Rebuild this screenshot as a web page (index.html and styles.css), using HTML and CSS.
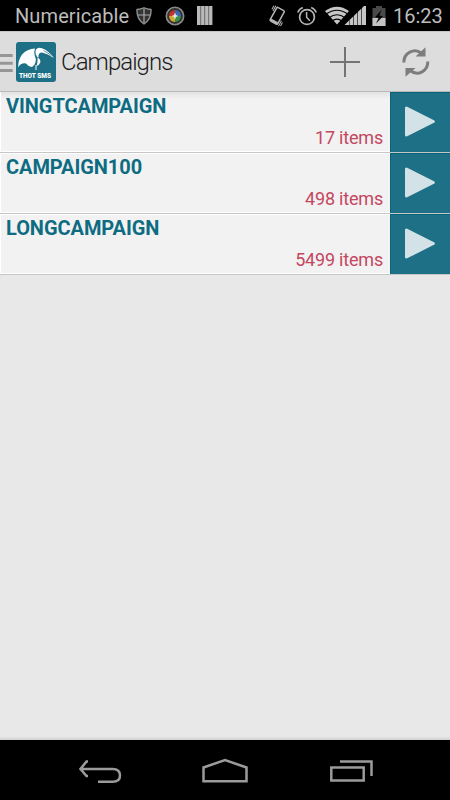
FILE: index.html
```html
<!DOCTYPE html>
<html lang="en">
<head>
  <meta charset="utf-8">
  <title>Campaigns</title>
  <link rel="stylesheet" href="styles.css">
</head>
<body>
<div class="screen">
  <div class="statusbar">
    <span class="carrier">Numericable</span>
    <!-- shield -->
    <svg class="shield" width="16" height="18" viewBox="0 0 16 18">
      <path d="M1 2.5Q5 2 8 .8Q11 2 15 2.5Q15.5 12 8 17Q.5 12 1 2.5Z" fill="#343434" stroke="#8f8f8f" stroke-width="1.4"/>
      <path d="M8 2v14M2 8h12" stroke="#aaa" stroke-width="1.2"/>
    </svg>
    <!-- colour wheel -->
    <svg class="wheel" width="20" height="20" viewBox="0 0 20 20">
      <circle cx="10" cy="10" r="8.7" fill="#343434" stroke="#8b8b8b" stroke-width="1.6"/>
      <path d="M10 10V4A6 6 0 0 0 4 10Z" fill="#c43428"/>
      <path d="M10 10V4A6 6 0 0 1 16 10Z" fill="#3569b5"/>
      <path d="M10 10H4A6 6 0 0 0 10 16Z" fill="#d2a72a"/>
      <path d="M10 10H16A6 6 0 0 1 10 16Z" fill="#349447"/>
      <path d="M10 7.500v5M7.500 10h5" stroke="#e8e8e8" stroke-width="1.600"/>
    </svg>
    <svg class="bars" width="16" height="19" viewBox="0 0 16 19">
      <path d="M0 0h15.400v19H0z" fill="#bababa"/>
      <path d="M3.700 0v19M7.700 0v19M11.700 0v19" stroke="#555" stroke-width=".8"/>
    </svg>
    <span class="spacer"></span>
    <!-- vibrate -->
    <svg class="vibrate" width="18" height="22" viewBox="0 0 18 22">
      <g transform="rotate(29 9 11)" fill="none" stroke="#b5b5b5">
        <rect x="4.800" y="3" width="8.600" height="15.500" rx="1.200" stroke-width="1.500"/>
        <path d="M5 17.200h8" stroke-width="2.400"/>
        <path d="M3 2.500v6M1.300 3.500v4M15.200 13v6M16.900 14v4" stroke-width="1"/>
      </g>
    </svg>
    <!-- alarm -->
    <svg class="alarm" width="20" height="20" viewBox="0 0 20 20" fill="none" stroke="#b5b5b5">
      <circle cx="10" cy="11" r="7.400" stroke-width="1.700"/>
      <path d="M9.600 6v5.200l3.200 3.600" stroke-width="1.500"/>
      <path d="M.8 6.500Q2 3 5.800 1.500M14.200 1.500Q18 3 19.200 6.500" stroke-width="1.600"/>
    </svg>
    <!-- wifi and signal -->
    <svg class="signal" width="42" height="20" viewBox="0 0 42 20">
      <path d="M0 5Q12 -3.500 24 5L12 18.500Z" fill="#c6c6c6"/>
      <path d="M1 8.300Q12 .3 23 8.300M4 11.700Q12 5.700 20 11.700M7 15Q12 11.200 17 15" fill="none" stroke="#000" stroke-width="1.100"/>
      <path d="M19.500 19L24 14.600V19zM24.500 14.100L28.200 10.500V19h-3.700zM28.800 9.900L32.300 6.500V19h-3.500zM32.900 5.900L36.400 2.500V19h-3.500zM37 2L41 -2V19h-4z" fill="#c6c6c6"/>
    </svg>
    <!-- battery -->
    <svg class="battery" width="14" height="20" viewBox="0 0 14 20">
      <path d="M4 0h6v2h3.500v18H.5V2H4z" fill="#494949"/>
      <path d="M.5 12h13v8H.5z" fill="#c3c3c3"/>
      <path d="M9.500 4L3 11.200l3.600.8L4 17.500l7-7.300-3.600-.8z" fill="#050505"/>
    </svg>
    <span class="clock">16:23</span>
  </div>

  <div class="actionbar">
    <svg class="drawer" width="13" height="20" viewBox="0 0 13 20">
      <path d="M0 2.500h12.700M0 10.300h12.700M0 17.500h12.700" stroke="#969696" stroke-width="3"/>
    </svg>
    <div class="logo">
      <svg width="40" height="28" viewBox="0 0 40 28">
        <!-- ibis -->
        <path d="M2.200 25.500Q2 18 6 12.500Q11 7 19 6.500Q17.500 10 18.800 14Q20.500 17 19.600 20Q19 23 16 25Q12 24.500 10 21.500Q5 20.500 2.200 25.500Z" fill="#fff"/>
        <path d="M21.500 15.500Q25 17 24.300 20.500Q23.500 23 20.500 24Q22 19.500 21.500 15.500Z" fill="#fff"/>
        <path d="M20 7.500Q22 4.600 26 6.300Q33 9 37.800 16Q32 11.500 26 10.500Q22 10.500 22.500 15.500L21.200 15Q18.500 11 20 7.500Z" fill="#fff"/>
        <path d="M27.500 8.600Q32.500 11 35.500 13.800" fill="none" stroke="#1d7085" stroke-width=".7"/>
        <path d="M20 23V28" stroke="#fff" stroke-width="1"/>
      </svg>
      <span class="logo-text">THOT SMS</span>
    </div>
    <h1 class="title">Campaigns</h1>
    <svg class="add" width="30" height="30" viewBox="0 0 30 30">
      <path d="M15 0v30M0 15h30" stroke="#747474" stroke-width="2"/>
    </svg>
    <!-- refresh -->
    <svg class="refresh" width="30" height="30" viewBox="0 0 30 30">
      <path d="M2.900 15.500C2.700 6 13 .4 20.500 6.200M26.800 14.500C27 24 17 29.600 9.500 23.800" fill="none" stroke="#7d7d7d" stroke-width="3"/>
      <path d="M24.500 .3V9.500H14.500ZM4.500 29.700V21H14.500Z" fill="#7d7d7d"/>
    </svg>
  </div>

  <div class="content">
    <div class="campaign first">
      <div class="info">
        <div class="name">VINGTCAMPAIGN</div>
        <div class="count">17 items</div>
      </div>
      <div class="play"><svg width="31" height="31" viewBox="0 0 31 31"><path d="M1.500 2V29L28.300 15.500Z"/></svg></div>
    </div>
    <div class="campaign">
      <div class="info">
        <div class="name">CAMPAIGN100</div>
        <div class="count">498 items</div>
      </div>
      <div class="play"><svg width="31" height="31" viewBox="0 0 31 31"><path d="M1.500 2V29L28.300 15.500Z"/></svg></div>
    </div>
    <div class="campaign">
      <div class="info">
        <div class="name">LONGCAMPAIGN</div>
        <div class="count">5499 items</div>
      </div>
      <div class="play"><svg width="31" height="31" viewBox="0 0 31 31"><path d="M1.500 2V29L28.300 15.500Z"/></svg></div>
    </div>
  </div>

  <div class="navbar">
    <svg class="back" width="43" height="24" viewBox="0 0 43 24" fill="none" stroke="#9b9b9b" stroke-width="2.500">
      <path d="M2 9H33.500Q41 9 41 15.400Q41 21.700 33.500 21.700H19M9 1.500H7.500L1.500 9L7.500 16H9"/>
    </svg>
    <svg class="home" width="46" height="25" viewBox="0 0 46 25" fill="none" stroke="#9b9b9b" stroke-width="2.500">
      <path d="M1.500 9.500L23 2L44.500 9.500V23.300H1.500Z"/>
    </svg>
    <svg class="recent" width="43" height="22" viewBox="0 0 43 22" fill="none" stroke="#9b9b9b" stroke-width="2.500">
      <path d="M1.300 7.500H33.700V20.500H1.300ZM10 1.500H41.500V16"/>
    </svg>
  </div>
</div>
</body>
</html>
```

FILE: styles.css
```css
body {
  margin: 0;
  background: #000;
  font-family: Roboto, "Liberation Sans", sans-serif;
}
svg {
  display: block;
  flex: none;
}
.screen {
  display: flex;
  flex-direction: column;
  width: 450px;
  height: 800px;
  overflow: hidden;
}
.statusbar {
  display: flex;
  align-items: center;
  height: 31px;
  flex: none;
  background: #000;
  color: #bcbcbc;
  font-size: 20px;
}
.carrier {
  width: 121px;
  padding-left: 15px;
  letter-spacing: 0.1px;
}
.wheel {
  margin-left: 13px;
}
.bars {
  margin-left: 12px;
}
.spacer {
  flex: 1;
}
.alarm {
  margin-left: 11px;
}
.signal {
  margin-left: 8px;
}
.battery {
  margin-left: 5px;
}
.clock {
  width: 50px;
  margin: 0 7px 0 7px;
}
.actionbar {
  display: flex;
  align-items: center;
  box-sizing: border-box;
  height: 61px;
  flex: none;
  background: #ddd;
  border-top: 1px solid #c5c5c5;
  border-bottom: 1px solid #b9b9b9;
}
.drawer {
  margin-top: 3px;
}
.logo {
  display: flex;
  flex-direction: column;
  width: 40px;
  height: 40px;
  margin: 0 5px 0 3px;
  border-radius: 3px;
  background: #1d7085;
}
.logo-text {
  margin-right: 2px;
  color: #fff;
  font-size: 6.5px;
  font-weight: 900;
  line-height: 12px;
  text-align: center;
  white-space: nowrap;
}
.title {
  width: 269px;
  margin: 0;
  color: #1b1b1b;
  font-size: 24px;
  font-weight: 300;
  letter-spacing: -0.95px;
}
.refresh {
  margin-left: 41px;
}
.content {
  flex: 1;
  background: #e8e8e8;
  box-shadow: inset 0 -3px 2px -1px #d2d2d2;
}
.campaign {
  display: flex;
  box-sizing: border-box;
  height: 61px;
  border-bottom: 1px solid #c6c6c6;
}
.info {
  display: flex;
  flex-direction: column;
  justify-content: space-between;
  box-sizing: border-box;
  width: 390px;
  padding: 1px 7px 1px 6px;
  background: #f2f2f2;
  box-shadow: inset 1px 1px #fff, inset 0 -1px #fff;
}
.first .info {
  background: linear-gradient(#e2e2e2, #f2f2f2 7px);
  box-shadow: inset 1px 0 #fff, inset 0 -1px #fff;
}
.name {
  color: #0e6c82;
  font-size: 20px;
  font-weight: 700;
  line-height: 26px;
  letter-spacing: -0.06px;
}
.count {
  color: #c44760;
  font-size: 18px;
  line-height: 26px;
  letter-spacing: -0.2px;
  text-align: right;
}
.play {
  box-sizing: border-box;
  width: 60px;
  padding: 14px 0 0 15px;
  background: #1d7086;
  box-shadow: inset 1px 0 #07647b, inset 0 1px #07647b;
}
.play path {
  fill: #d2e2e7;
  stroke: #d2e2e7;
  stroke-width: 3px;
  stroke-linejoin: round;
}
.navbar {
  display: flex;
  box-sizing: border-box;
  height: 60px;
  flex: none;
  padding: 20px 0 0 79px;
  background: #000;
}
.home {
  margin: -2px 0 0 80px;
}
.recent {
  margin-left: 82px;
}
```
